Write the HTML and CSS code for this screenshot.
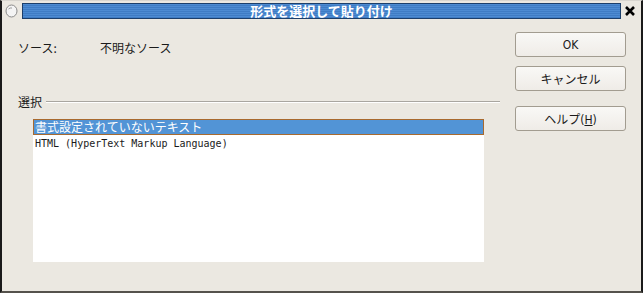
FILE: index.html
```html
<!DOCTYPE html>
<html lang="ja">
<head>
    <meta charset="UTF-8">
    <title>形式を選択して貼り付け</title>
    <link rel="stylesheet" href="styles.css">
</head>
<body>

    <div class="window">
        <!-- Title bar -->
        <div class="titlebar">
            <div class="win-icon">
                <svg width="13" height="14" viewBox="0 0 13 14">
                    <ellipse cx="6.5" cy="7" rx="5.5" ry="6" fill="#f4f4f4" stroke="#8a8a8a" stroke-width="1"/>
                    <path d="M3.5 5 Q5 3.5 7 4" stroke="#9a9a9a" stroke-width="1" fill="none"/>
                </svg>
            </div>
            <div class="title-bar-fill">
                <span class="title">形式を選択して貼り付け</span>
            </div>
            <div class="close">
                <svg width="12" height="12" viewBox="0 0 12 12">
                    <path d="M2 2 L10 10 M10 2 L2 10" stroke="#000" stroke-width="2.6"/>
                </svg>
            </div>
        </div>

        <div class="content">
            <div class="main-col">
                <div class="source-row">
                    <span class="source-label">ソース:</span>
                    <span class="source-value">不明なソース</span>
                </div>

                <div class="group-heading">
                    <span>選択</span>
                    <div class="group-line"></div>
                </div>

                <ul class="format-list">
                    <li class="selected">書式設定されていないテキスト</li>
                    <li class="mono">HTML (HyperText Markup Language)</li>
                </ul>
            </div>

            <div class="button-col">
                <button class="btn">OK</button>
                <button class="btn">キャンセル</button>
                <button class="btn help">ヘルプ(<u>H</u>)</button>
            </div>
        </div>
    </div>

</body>
</html>
```

FILE: styles.css
```css
body {
    margin: 0;
    background: #ebe8e1;
    font-family: 'DejaVu Sans', 'Noto Sans CJK JP', sans-serif;
    font-size: 12px;
    color: #1a1a1a;
}

.window {
    width: 643px;
    height: 293px;
    box-sizing: border-box;
    background: #ebe8e1;
    border-left: 2px solid #1a1a1a;
    border-right: 2px solid #1a1a1a;
    border-bottom: 2px solid #55524c;
    border-top: 1px solid #d8d5cf;
}

.titlebar {
    display: flex;
    align-items: center;
    height: 20px;
}

.win-icon {
    width: 18px;
    display: flex;
    justify-content: center;
}

.title-bar-fill {
    width: 599px;
    height: 16px;
    margin-left: 2px;
    box-sizing: border-box;
    border: 1px solid #1c3f6b;
    background: repeating-linear-gradient(to bottom, #4d8bd2 0px, #4d8bd2 1px, #3f7cc4 1px, #3f7cc4 2px);
    display: flex;
    justify-content: center;
    align-items: center;
}

.title {
    color: #ffffff;
    font-family: 'Noto Sans CJK JP', sans-serif;
    font-weight: bold;
    font-size: 13px;
    line-height: 14px;
}

.close {
    width: 16px;
    display: flex;
    justify-content: center;
    margin-left: 1px;
}

.content {
    display: flex;
    padding-left: 16px;
}

.main-col {
    width: 482px;
    padding-top: 19px;
}

.source-row {
    display: flex;
    line-height: 16px;
    font-family: 'Noto Sans CJK JP', sans-serif;
}

.source-label {
    width: 82px;
}

.group-heading {
    display: flex;
    align-items: center;
    margin-top: 38px;
    line-height: 16px;
    font-family: 'Noto Sans CJK JP', sans-serif;
}

.group-line {
    flex: 1;
    margin-left: 4px;
    height: 1px;
    background: #a9a6a0;
    border-bottom: 1px solid #ffffff;
}

.format-list {
    list-style: none;
    margin: 9px 0 0 15px;
    padding: 0;
    width: 451px;
    height: 143px;
    background: #ffffff;
}

.format-list li {
    height: 16px;
    line-height: 16px;
    padding-left: 2px;
    box-sizing: border-box;
}

.format-list .selected {
    background: #5294d6;
    border: 1px solid #a86a2f;
    color: #ffffff;
    font-family: 'Noto Sans CJK JP', sans-serif;
    line-height: 14px;
    padding-left: 1px;
}

.format-list .mono {
    font-family: 'DejaVu Sans Mono', monospace;
    font-size: 10px;
    margin-top: 1px;
}

.button-col {
    display: flex;
    flex-direction: column;
    margin-left: 15px;
    padding-top: 11px;
}

.btn {
    width: 111px;
    height: 25px;
    margin: 0 0 9px 0;
    padding: 0;
    background: linear-gradient(to bottom, #f9f8f6, #efece7);
    border: 1px solid #a29c90;
    border-radius: 3px;
    font-family: 'DejaVu Sans Condensed', 'Noto Sans CJK JP', sans-serif;
    font-size: 12px;
    color: #1a1a1a;
}

.btn.help {
    margin-top: 6px;
}
```
